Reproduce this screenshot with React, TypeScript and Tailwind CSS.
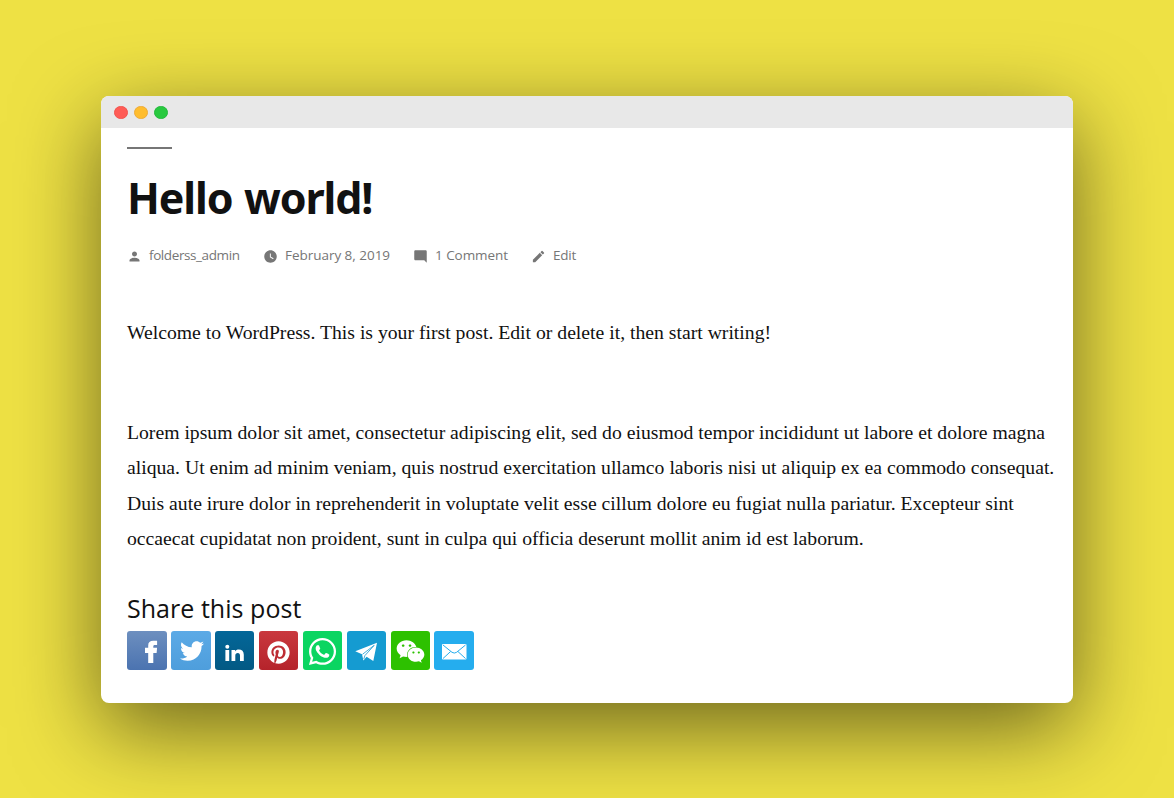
import type { ReactNode } from 'react';
import { FaPinterest, FaTwitter, FaWeixin, FaWhatsapp } from 'react-icons/fa';
import { MdEdit, MdModeComment, MdPerson, MdWatchLater } from 'react-icons/md';

function Meta({ icon, label, width, spacing }: { icon: ReactNode; label: string; width: string; spacing: string }) {
  return (
    <span className={`flex items-center ${width}`}>
      <span className="mr-[7px] pt-[3px]">{icon}</span>
      <span className={spacing}>{label}</span>
    </span>
  );
}

function Tile({ label, color, width = 'w-[39px]', children }: { label: string; color: string; width?: string; children: ReactNode }) {
  return (
    <a aria-label={label} className={`h-[39px] rounded-[3px] text-white ${width} ${color}`}>
      {children}
    </a>
  );
}

const lines = [
  'Lorem ipsum dolor sit amet, consectetur adipiscing elit, sed do eiusmod tempor incididunt ut labore et dolore magna',
  'aliqua. Ut enim ad minim veniam, quis nostrud exercitation ullamco laboris nisi ut aliquip ex ea commodo consequat.',
  'Duis aute irure dolor in reprehenderit in voluptate velit esse cillum dolore eu fugiat nulla pariatur. Excepteur sint',
  'occaecat cupidatat non proident, sunt in culpa qui officia deserunt mollit anim id est laborum.',
];

export default function App() {
  return (
    <div className="h-[798px] w-[1174px] overflow-hidden bg-[#eee144] px-[101px] pt-24">
      <main className="h-[607px] w-[972px] overflow-hidden rounded-lg bg-white text-[#111] shadow-[0_25px_85px_rgba(0,0,0,0.55)]">
        <div className="flex h-8 items-center gap-[6.5px] bg-[#e8e8e8] pt-[0.5px] pl-[13px]">
          <span className="size-[13.5px] rounded-full border border-[#f2544e] bg-[#ff5c56]" />
          <span className="size-[13.5px] rounded-full border border-[#eeab38] bg-[#ffbd2e]" />
          <span className="size-[13.5px] rounded-full border border-[#24b93c] bg-[#28c93f]" />
        </div>
        <article className="px-[26px] pt-[19px]">
          <div className="h-[2px] w-[45px] bg-[#767676]" />
          <h1 className="mt-[22px] h-[54px] whitespace-nowrap font-['Noto_Sans','Open_Sans',sans-serif] text-[43px] leading-[54px] font-bold tracking-[-1.12px] [word-spacing:1.5px]">
            Hello world!
          </h1>
          <div className="mt-[20px] flex h-[20px] items-center whitespace-nowrap font-['Open_Sans','Noto_Sans',sans-serif] text-[13.5px] leading-[20px] text-[#767676]">
            <Meta icon={<MdPerson size={15} />} label="folderss_admin" width="w-[136px]" spacing="tracking-[-0.4px]" />
            <Meta icon={<MdWatchLater size={15} />} label="February 8, 2019" width="w-[150px]" spacing="tracking-[-0.03px]" />
            <Meta icon={<MdModeComment size={15} />} label="1 Comment" width="w-[118px]" spacing="tracking-[-0.05px]" />
            <Meta icon={<MdEdit size={15} />} label="Edit" width="" spacing="tracking-[-0.2px]" />
          </div>
          <div className="whitespace-nowrap font-['Liberation_Serif',serif] text-[19.69px] leading-[35.4px]">
            <p className="mt-[50px]">Welcome to WordPress. This is your first post. Edit or delete it, then start writing!</p>
            <div className="mt-[64.6px]">
              {lines.map((line) => (
                <p key={line}>{line}</p>
              ))}
            </div>
          </div>
          <h2 className="mt-[31px] h-[40px] font-['Open_Sans','Noto_Sans',sans-serif] text-[25px] leading-[40px] tracking-[0.04px]">Share this post</h2>
          <div className="mt-[3px] grid grid-cols-[40px_40px_40px_40px_40px_40px_39px_40px] justify-start gap-x-1">
            <Tile label="Facebook" width="w-[40px]" color="bg-linear-to-b from-[#6d8fbf] to-[#4b73b0]">
              <svg width="39" height="39" viewBox="0 0 39 39" fill="currentColor">
                <path d="M21.2 32V22H18v-5.2h3.2v-2.4c0-3 1.8-4.6 5-4.6h3.9v4.3h-2.3c-1.1 0-1.5.5-1.5 1.5v1.2h3.8l-.5 5.2h-3.3v10Z" />
              </svg>
            </Tile>
            <Tile label="Twitter" width="w-[40px]" color="bg-linear-to-b from-[#5caae6] to-[#4e9edc]">
              <FaTwitter size={24} className="mt-[8px] ml-[9px]" />
            </Tile>
            <Tile label="LinkedIn" color="bg-linear-to-b from-[#036799] to-[#035984]">
              <svg width="39" height="39" viewBox="0 0 39 39" fill="currentColor">
                <circle cx="12.3" cy="15.8" r="2" />
                <path d="M10.4 18.9h3.8V30h-3.8ZM16.5 18.9h3.6v1.5c.8-1.2 2-1.8 3.6-1.8 3.2 0 5.1 1.9 5.1 5.1V30H25v-5.3c0-1.8-.7-2.7-2.2-2.7-1.6 0-2.5 1-2.5 2.7V30h-3.8Z" />
              </svg>
            </Tile>
            <Tile label="Pinterest" color="bg-linear-to-b from-[#c9383e] to-[#b5232b]">
              <FaPinterest size={23} className="mt-[10px] ml-[8px]" />
            </Tile>
            <Tile label="WhatsApp" color="bg-[#0bd561]">
              <FaWhatsapp size={31} className="mt-[5px] ml-[4px]" />
            </Tile>
            <Tile label="Telegram" color="bg-[#159bd1]">
              <svg width="39" height="39" viewBox="0 0 39 39" fill="currentColor">
                <path d="M8.3 20.2 30 11.7 26.3 30 19.6 25.7 16.4 29.4 15 23.2Z" />
                <path d="M15.5 23.3 27.2 14.3 17.9 24.6 16.8 28" fill="none" stroke="#159bd1" strokeWidth=".8" />
              </svg>
            </Tile>
            <Tile label="WeChat" color="bg-[#2dc100]">
              <FaWeixin size={29} className="mt-[6px] ml-[5px]" />
            </Tile>
            <Tile label="Email" width="w-[40px]" color="bg-[#25adee]">
              <svg width="39" height="39" viewBox="0 0 39 39" fill="none">
                <rect x="8" y="13" width="24.5" height="15.5" rx="1" fill="white" />
                <path d="m9 14 9 7.3q2.3 1.5 4.6 0L31.5 14M9 27.5l7.6-7M31.5 27.5l-7.6-7" stroke="#25adee" strokeWidth="1" />
              </svg>
            </Tile>
          </div>
        </article>
      </main>
    </div>
  );
}
